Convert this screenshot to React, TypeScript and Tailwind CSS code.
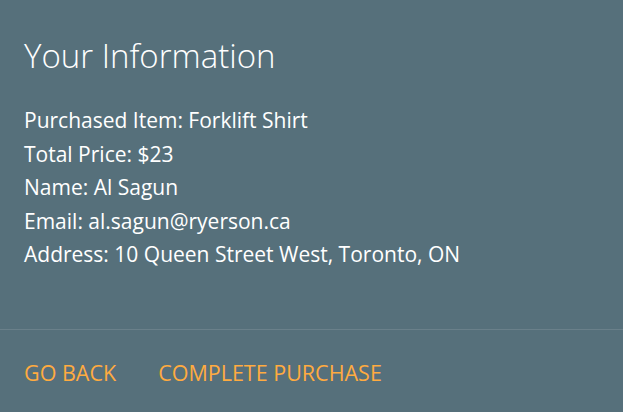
export default function App() {
  const rows = [
    'Purchased Item: Forklift Shirt',
    'Total Price: $23',
    'Name: Al Sagun',
    'Email: al.sagun@ryerson.ca',
    'Address: 10 Queen Street West, Toronto, ON',
  ]

  return (
    <div className="h-[412px] w-[623px] bg-[#56707b] font-['Open_Sans',sans-serif] text-white">
      <div className="h-[329px] px-6 pt-[30px]">
        <h2 className="text-[33px] leading-[52px] font-light">Your Information</h2>
        <div className="mt-[22px] text-[21px] leading-[33.5px]">
          {rows.map((r) => (
            <p key={r}>{r}</p>
          ))}
        </div>
      </div>
      <div className="flex gap-[42px] border-t border-[#6a808a] px-6 pt-[27px] text-[21.5px] text-[#ffab40] uppercase">
        <a href="#">Go back</a>
        <a href="#">Complete purchase</a>
      </div>
    </div>
  )
}
